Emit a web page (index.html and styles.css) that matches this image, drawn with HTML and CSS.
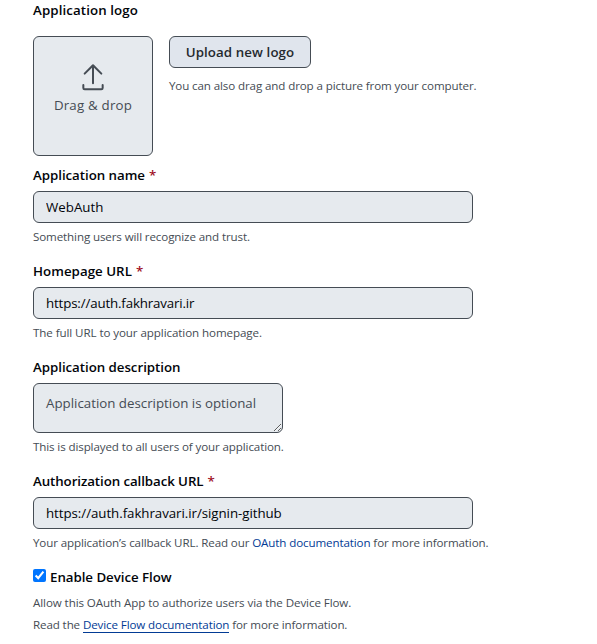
FILE: index.html
```
<!DOCTYPE html>
<html lang="en">
<head>
<meta charset="utf-8">
<title>OAuth application</title>
<link rel="stylesheet" href="styles.css">
</head>
<body>
<form class="form">
  <section class="logo-section">
    <h2 class="label label-wide">Application logo</h2>
    <div class="logo-row">
      <div class="dropzone">
        <svg class="upload-icon" viewBox="0 0 24 24" width="32" height="32" aria-hidden="true"><path d="M4.75 17.25a.75.75 0 0 1 .75.75v2.25c0 .138.112.25.25.25h12.5a.25.25 0 0 0 .25-.25V18a.75.75 0 0 1 1.5 0v2.25A1.75 1.75 0 0 1 18.25 22H5.75A1.75 1.75 0 0 1 4 20.25V18a.75.75 0 0 1 .75-.75Z"/><path d="M5.22 9.97a.749.749 0 0 1 0-1.06l6.25-6.25a.749.749 0 0 1 1.06 0l6.25 6.25a.749.749 0 1 1-1.06 1.06l-4.97-4.969V16.75a.75.75 0 0 1-1.5 0V5.001L6.28 9.97a.749.749 0 0 1-1.06 0Z"/></svg>
        <span class="dropzone-text">Drag &amp; drop</span>
      </div>
      <div class="logo-actions">
        <button type="button" class="button">Upload new logo</button>
        <p class="note">You can also drag and drop a picture from your computer.</p>
      </div>
    </div>
  </section>
  <div class="field">
    <label class="label" for="name">Application name<span class="required">*</span></label>
    <input class="input" id="name" type="text" value="WebAuth">
    <p class="note">Something users will recognize and trust.</p>
  </div>
  <div class="field">
    <label class="label label-homepage" for="homepage">Homepage URL<span class="required">*</span></label>
    <input class="input input-homepage" id="homepage" type="text" value="https://auth.fakhravari.ir">
    <p class="note note-homepage">The full URL to your application homepage.</p>
  </div>
  <div class="field">
    <label class="label" for="description">Application description</label>
    <textarea class="input textarea" id="description" placeholder="Application description is optional"></textarea>
    <p class="note">This is displayed to all users of your application.</p>
  </div>
  <div class="field">
    <label class="label label-callback" for="callback">Authorization callback URL<span class="required">*</span></label>
    <input class="input input-callback" id="callback" type="text" value="https://auth.fakhravari.ir/signin-github">
    <p class="note">Your application’s callback URL. Read our <a class="link" href="#">OAuth documentation</a> for more information.</p>
  </div>
  <div class="device">
    <label class="label check-row"><input type="checkbox" class="check" checked>Enable Device Flow</label>
    <p class="note note-device">Allow this OAuth App to authorize users via the Device Flow.</p>
    <p class="note">Read the <a class="link link-underlined" href="#">Device Flow documentation</a> for more information.</p>
  </div>
</form>
</body>
</html>
```
FILE: styles.css
```
* { box-sizing: border-box; }
body {
  margin: 0;
  background: #fff;
  color: #010409;
  font: 13.3px/20px "Open Sans", sans-serif;
  overflow: hidden;
}
h2, p { margin: 0; }
.form { padding-left: 33px; }

.label {
  display: block;
  font-size: 13.3px;
  font-weight: 600;
  line-height: 20px;
  letter-spacing: -0.04px;
}
.label-wide { letter-spacing: 0.1px; }
.label-homepage { letter-spacing: 0.03px; }
.label-callback { letter-spacing: -0.08px; }
.required { margin-left: 4px; color: #a0111f; }

.logo-row { display: flex; gap: 16px; margin-top: 16px; }
.dropzone {
  display: flex;
  flex-direction: column;
  align-items: center;
  width: 120px;
  height: 120px;
  padding-top: 24px;
  border: 1px solid #454c54;
  border-radius: 6px;
  background: #e6eaee;
  color: #454c54;
}
.upload-icon { fill: currentColor; }
.dropzone-text { margin-top: 2px; letter-spacing: 0.2px; }
.button {
  display: block;
  width: 142px;
  height: 32px;
  padding: 0;
  border: 1px solid #454c54;
  border-radius: 6px;
  background: #e0e5ed;
  color: #25292e;
  font: 600 13.3px/20px "Open Sans", sans-serif;
  letter-spacing: 0.1px;
}

.note {
  color: #454c54;
  font-size: 11.6px;
  line-height: 18px;
  letter-spacing: -0.12px;
  white-space: nowrap;
}
.note-homepage { letter-spacing: -0.09px; }
.logo-actions .note { margin-top: 9px; }

.field { height: 87px; margin-bottom: 9px; }
.logo-section + .field { margin-top: 9px; }
.field:has(.textarea) { height: 105px; }
.input {
  display: block;
  width: 440px;
  height: 32px;
  margin: 6px 0 5px;
  padding: 5px 12px;
  border: 1px solid #454c54;
  border-radius: 6px;
  background: #e6eaee;
  color: #010409;
  font: 13.3px/20px "Open Sans", sans-serif;
  outline: none;
}
.input-homepage { letter-spacing: -0.15px; }
.input-callback { letter-spacing: -0.05px; }
.textarea { width: 250px; height: 50px; padding-top: 9px; resize: both; overflow: hidden; }
.textarea::placeholder { color: #454c54; opacity: 1; }

.link { color: #023b95; text-decoration: none; }
.link-underlined { border-bottom: 1px solid #023b95; }

.check-row { display: flex; align-items: center; }
.check { width: 13px; height: 13px; margin: 0 4px 3px 0; accent-color: #0075ff; }
.note-device { margin: 7px 0 4px; letter-spacing: -0.09px; }
```
